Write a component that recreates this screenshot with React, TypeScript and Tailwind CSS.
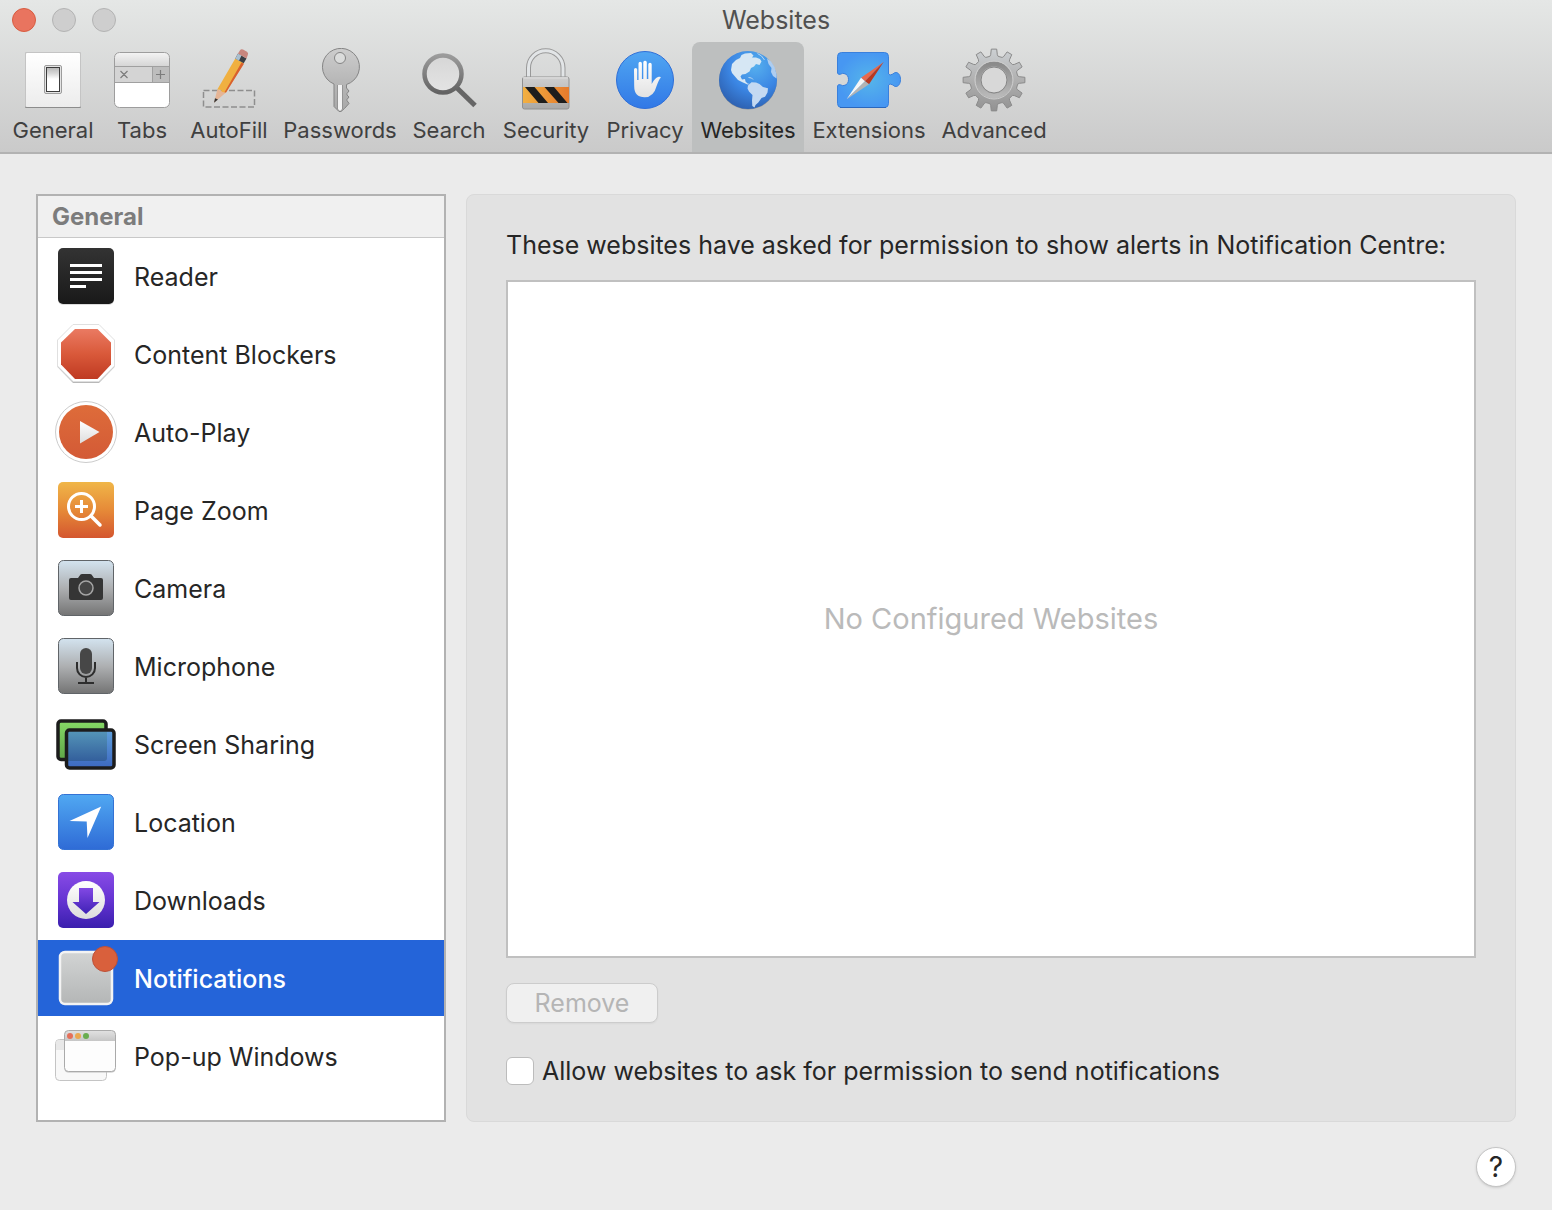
import { useState } from "react"
import type { ReactNode } from "react"

interface ToolbarTab {
  label: string
  width: string
  icon: ReactNode
}

interface SidebarItem {
  label: string
  icon: ReactNode
}

interface GradientProps {
  id: string
  from: string
  to: string
  mid?: string
}

const Gradient: React.FC<GradientProps> = ({ id, from, to, mid }) => (
  <linearGradient id={id} x1="0" y1="0" x2="0" y2="1">
    <stop offset="0" stopColor={from} />
    {mid && <stop offset="0.5" stopColor={mid} />}
    <stop offset="1" stopColor={to} />
  </linearGradient>
)

const Icon: React.FC<{ children: ReactNode }> = ({ children }) => (
  <svg className="size-16 shrink-0" viewBox="0 0 64 64" fill="none" aria-hidden="true">
    {children}
  </svg>
)

// one outline for the whole gear, twelve teeth
const gearPoints = Array.from({ length: 12 }, (_, i) => {
  const corners = [
    [-10, 24],
    [-7.5, 25.5],
    [-5, 31],
    [5, 31],
    [7.5, 25.5],
    [10, 24],
  ]
  return corners
    .map(([deg, r]) => {
      const a = ((i * 30 + deg - 90) * Math.PI) / 180
      return `${(32 + r * Math.cos(a)).toFixed(2)},${(32 + r * Math.sin(a)).toFixed(2)}`
    })
    .join(" ")
}).join(" ")

const toolbarTabs: ToolbarTab[] = [
  {
    label: "General",
    width: "w-[98px]",
    icon: (
      <Icon>
        <defs>
          <Gradient id="plate" from="#ffffff" to="#ececec" />
          <Gradient id="rocker" from="#b9b9b9" mid="#d8d8d8" to="#ffffff" />
        </defs>
        <rect x="4" y="5" width="56" height="55" rx="1" fill="#8c8c8c" />
        <rect x="4" y="4" width="56" height="55" rx="1" fill="#c4c4c4" />
        <rect x="5" y="5" width="54" height="54" rx="1" fill="url(#plate)" />
        <rect x="23.5" y="17.5" width="17" height="28" rx="1.5" fill="#e4e4e4" stroke="#9c9c9c" />
        <rect x="25.5" y="19.5" width="13" height="24" fill="#fff" stroke="#3c3c3c" />
        <rect x="26" y="20" width="12" height="11" fill="url(#rocker)" />
      </Icon>
    ),
  },
  {
    label: "Tabs",
    width: "w-20",
    icon: (
      <Icon>
        <defs>
          <Gradient id="tabsBar" from="#f4f4f4" to="#d6d6d6" />
        </defs>
        <rect x="4.5" y="4.5" width="55" height="55" rx="5" fill="#fff" />
        <path d="M4.5 18V9.5a5 5 0 0 1 5-5h45a5 5 0 0 1 5 5V18Z" fill="url(#tabsBar)" />
        <rect x="5" y="18" width="37" height="16" fill="#d4d4d4" />
        <rect x="42" y="18" width="17" height="16" fill="#bdbdbd" />
        <path d="M5 18.500H59M5 34.500H59M42.500 18V34" stroke="#a0a0a0" />
        <path d="m10.500 23 7 7m0-7-7 7M50.500 22v9M46 26.500h9" stroke="#7c7c7c" strokeWidth="1.200" />
        <rect x="4.5" y="4.5" width="55" height="55" rx="5" stroke="#9d9d9d" />
      </Icon>
    ),
  },
  {
    label: "AutoFill",
    width: "w-[94px]",
    icon: (
      <Icon>
        <rect x="6.5" y="42.5" width="51" height="16.5" stroke="#8e8e8e" strokeWidth="1.5" strokeDasharray="6 2.5" />
        <path d="M17 54.800 20.300 41.500 29 44.500Z" fill="#e5b596" />
        <path d="m17 54.800 1-4.500 3 1.200Z" fill="#333" />
        <path d="m20.300 41.500 18-31 8.500 4.500L29 44.500l-4-.5-1-2Z" fill="#f0b040" />
        <path d="m44.500 14.500 2.500 1.200L29 44.500l-1.500-.3Z" fill="#d8602f" />
        <path d="m38.300 10.500 2.700-5 8.500 5-2.800 4.700Z" fill="#3b3f45" />
        <path d="m38.300 10.500 2.700-5 3.500 2-2.500 5.200Z" fill="#a9c0d0" />
        <path d="m41 5.500 2-3.300q1-1.500 3-.7l4 2.300q1.800 1.200.8 3.200l-1.300 3.500Z" fill="#c8867e" />
      </Icon>
    ),
  },
  {
    label: "Passwords",
    width: "w-32",
    icon: (
      <Icon>
        <defs>
          <Gradient id="key" from="#cdcdcd" mid="#b8b8b8" to="#a8a8a8" />
        </defs>
        <path
          fillRule="evenodd"
          d="M26 36A18.500 18.500 0 1 1 38.500 36.500V40l2.500 3-2 2.500v1.500l2 2-2 2.500v1l2 3-4.500 5-3.500 3h-2l-5-5ZM32 4.500a5.500 5.500 0 1 0 0 11 5.500 5.500 0 0 0 0-11Z"
          fill="url(#key)"
          stroke="#858585"
        />
        <path d="M30 37h4v24l-2 2-2-2Z" fill="#f2f2f2" />
        <path d="M29.500 37v24M34.500 37v24" stroke="#8d8d8d" strokeWidth=".8" />
      </Icon>
    ),
  },
  {
    label: "Search",
    width: "w-[90px]",
    icon: (
      <Icon>
        <defs>
          <Gradient id="lensRing" from="#9b9b9b" to="#636363" />
          <Gradient id="lensGlass" from="#d6d6d6" to="#e4e4e4" />
        </defs>
        <path d="m39 39 19 18.500" stroke="#666" strokeWidth="5" />
        <circle cx="26" cy="26" r="18.5" fill="url(#lensGlass)" stroke="url(#lensRing)" strokeWidth="4.5" />
      </Icon>
    ),
  },
  {
    label: "Security",
    width: "w-[104px]",
    icon: (
      <Icon>
        <defs>
          <Gradient id="lockBody" from="#cfcfcf" to="#a8a8a8" />
          <linearGradient id="lockStripe">
            <stop offset="0" stopColor="#f2b042" />
            <stop offset="1" stopColor="#e57a2c" />
          </linearGradient>
        </defs>
        <path d="M14.500 30V20a17 17 0 0 1 34.500 0v10" stroke="#999" strokeWidth="5" />
        <path d="M14.500 30V20a17 17 0 0 1 34.500 0v10" stroke="#e2e5e7" strokeWidth="3" />
        <rect x="8.5" y="29" width="46.5" height="32" rx="2" fill="url(#lockBody)" stroke="#909090" />
        <path d="M9 29.800h45" stroke="#e6e6e6" />
        <rect x="9" y="39" width="46" height="16" fill="url(#lockStripe)" />
        <path d="M11 39h9.500L34 55h-9.500ZM30.500 39H40l13.500 16H44.500Z" fill="#1d1d1d" />
      </Icon>
    ),
  },
  {
    label: "Privacy",
    width: "w-[94px]",
    icon: (
      <Icon>
        <defs>
          <Gradient id="privacy" from="#50a6f2" to="#3178e6" />
          <Gradient id="hand" from="#ffffff" to="#e2e2e2" />
        </defs>
        <circle cx="32" cy="32" r="28.5" fill="url(#privacy)" stroke="#2f6fd8" />
        <path
          d="M21 21.500a1.600 1.600 0 0 1 3.200 0V32h1.300V15.500a1.700 1.700 0 0 1 3.400 0V31h1.400V14.200a1.800 1.800 0 0 1 3.500 0V31h1.500V16.500a1.700 1.700 0 0 1 3.400 0V36q3.300-6.500 7-7.300 2.500-.3 2 1.100-1.700 1.500-4 8-3 11.500-12 11.500-10.500 0-10.500-11Z"
          fill="url(#hand)"
        />
      </Icon>
    ),
  },
  {
    label: "Websites",
    width: "w-28",
    icon: (
      <Icon>
        <defs>
          <radialGradient id="globe" cx="0.62" cy="0.25" r="0.8">
            <stop offset="0" stopColor="#56b0ee" />
            <stop offset="0.55" stopColor="#3b86e4" />
            <stop offset="1" stopColor="#2d5fae" />
          </radialGradient>
        </defs>
        <circle cx="32" cy="32.5" r="29" fill="#8f9296" />
        <circle cx="32" cy="32" r="29" fill="url(#globe)" />
        <path
          d="M15 22 16 16 20 12 24 10 25.500 7 29 5.500 35 5 37.500 7.500 36 9.500 40 9.500 44 11 45.500 13.500 43.500 17 40 16 38 18.500 35 20 33.500 23.500 31 25 29.500 26 26 26.500 24.500 28.500 26 31.500 29 31 29.500 33.500 31.500 35.500 34 36 31.500 36.500 27 34.500 22 32 19 28.500 16 25Z"
          fill="#d6e7f4"
        />
        <path
          d="M32 37.500 35.500 34.300 40 34.500 43.500 36 47 39 52 40.300 51.500 44.500 49 48.700 45.500 50 42.300 54.500 39.500 57 38.500 59.500 36.300 58 36 52.500 36.500 47 33 43.500 31.500 40.500Z"
          fill="#c4d9f2"
        />
        <path d="M51 10.500 55 13.500 58.500 19 60.700 27 60.500 30.500 57 28 55 24 55.500 20 52.500 16Z" fill="#aecdf0" />
        <path d="m32.500 29.500 3 .5 1.500 1.500M41.500 5.500l4 2.500 3 4" stroke="#b8d5f0" />
      </Icon>
    ),
  },
  {
    label: "Extensions",
    width: "w-[130px]",
    icon: (
      <Icon>
        <defs>
          <radialGradient id="puzzle">
            <stop offset="0" stopColor="#55b5ea" />
            <stop offset="1" stopColor="#4797f2" />
          </radialGradient>
        </defs>
        <path
          d="M4.500 4.500h43a4 4 0 0 1 4 4V26q1 2 4.500 0 1-1.500 3-1.500c2.500 0 4.500 3 4.500 7s-2 7-4.500 7q-2 0-3-1.500-3.500-2-4.500 0v18.500a4 4 0 0 1-4 4h-43a4 4 0 0 1-4-4V38q.5-2 3-1.200 2 1.200 3.500.7 4.500-1 4.500-6t-4.500-6q-1.500-.5-3.500.7-2.500.8-3-1.200V8.500a4 4 0 0 1 4-4Z"
          fill="url(#puzzle)"
          stroke="#3a80dc"
        />
        <path d="M3 59.500h46" stroke="#2a67bd" />
        <path d="M46.700 14 24 29.700l4 3.500Z" fill="#e8694c" />
        <path d="M46.700 14 28 33.200l4 3.100Z" fill="#b93820" />
        <path d="M9.700 51.300 24 29.700l4 3.500Z" fill="#f6f6f6" />
        <path d="M9.700 51.300 28 33.200l4 3.100Z" fill="#b4b4b4" />
      </Icon>
    ),
  },
  {
    label: "Advanced",
    width: "w-[120px]",
    icon: (
      <Icon>
        <defs>
          <Gradient id="gear" from="#ccd0d3" mid="#b0b0b0" to="#929292" />
          <Gradient id="gearRing" from="#8b8b8b" to="#b9b9b9" />
        </defs>
        <polygon points={gearPoints} fill="url(#gear)" stroke="#8b8b8b" strokeLinejoin="round" />
        <circle cx="32" cy="32" r="16" stroke="url(#gearRing)" strokeWidth="5" />
        <circle cx="32" cy="32" r="19" stroke="#cfcfcf" />
        <circle cx="32" cy="32" r="13" fill="#d8d8d8" stroke="#858585" />
      </Icon>
    ),
  },
]

const sidebarItems: SidebarItem[] = [
  {
    label: "Reader",
    icon: (
      <Icon>
        <defs>
          <Gradient id="reader" from="#333333" to="#191919" />
        </defs>
        <rect x="4" y="5" width="56" height="56" rx="5" fill="#dcdcdc" />
        <rect x="4" y="4" width="56" height="56" rx="5" fill="url(#reader)" />
        <path d="M16 21.500h32M16 28.500h32M16 35.500h32M16 42.500h16" stroke="#fff" strokeWidth="3" />
      </Icon>
    ),
  },
  {
    label: "Content Blockers",
    icon: (
      <Icon>
        <defs>
          <Gradient id="blocker" from="#ea7a62" mid="#d9593a" to="#bf3a22" />
        </defs>
        <path d="M19 4h26l15.500 15v26L45 61H19L3.500 45V19Z" fill="#b8b8b8" />
        <path d="M19 2.500h26L60.500 18v26L45 59.500H19L3.500 44V18Z" fill="#fff" stroke="#e0e0e0" />
        <path d="M21 7h22.500L57 20.500v22L43.500 57H21L7 42.500v-22Z" fill="url(#blocker)" />
      </Icon>
    ),
  },
  {
    label: "Auto-Play",
    icon: (
      <Icon>
        <defs>
          <Gradient id="play" from="#de6c3a" to="#d35a36" />
          <Gradient id="playArrow" from="#ffffff" to="#dddddd" />
        </defs>
        <circle cx="32" cy="32" r="30.5" fill="#fff" stroke="#cccccc" />
        <circle cx="32" cy="32" r="27" fill="url(#play)" />
        <path d="M26 21v22.500L45.500 32Z" fill="url(#playArrow)" />
      </Icon>
    ),
  },
  {
    label: "Page Zoom",
    icon: (
      <Icon>
        <defs>
          <Gradient id="zoom" from="#f0b648" mid="#e68a38" to="#d4562f" />
        </defs>
        <rect x="4" y="4" width="56" height="56" rx="5" fill="url(#zoom)" />
        <circle cx="27.5" cy="28.5" r="13" stroke="#fff" strokeWidth="3" />
        <path d="M27.500 22v13M21 28.500h13" stroke="#fff" strokeWidth="3" />
        <path d="m37 38 9 9" stroke="#fff" strokeWidth="3.5" strokeLinecap="round" />
      </Icon>
    ),
  },
  {
    label: "Camera",
    icon: (
      <Icon>
        <defs>
          <Gradient id="camera" from="#d3e3ef" mid="#aeb0b2" to="#747474" />
        </defs>
        <rect x="4.5" y="4.5" width="55" height="55" rx="5" fill="url(#camera)" stroke="#606468" />
        <path
          d="M17 22h7l2.500-3.500q.5-.5 1.500-.5h8q1 0 1.500.5L40 22h7a2 2 0 0 1 2 2v18a2 2 0 0 1-2 2H17a2 2 0 0 1-2-2V24a2 2 0 0 1 2-2Z"
          fill="#353535"
        />
        <circle cx="32" cy="32" r="7" fill="#454545" stroke="#a5a5a5" strokeWidth="1.5" />
      </Icon>
    ),
  },
  {
    label: "Microphone",
    icon: (
      <Icon>
        <defs>
          <Gradient id="mic" from="#d3e3ef" mid="#aeb0b2" to="#747474" />
        </defs>
        <rect x="4.5" y="4.5" width="55" height="55" rx="5" fill="url(#mic)" stroke="#606468" />
        <rect x="26" y="14" width="12" height="26" rx="6" fill="#474747" />
        <path d="M23 28v6a9 9 0 0 0 18 0v-6M32 43v6M24 49h16" stroke="#2d2d2d" strokeWidth="2" />
      </Icon>
    ),
  },
  {
    label: "Screen Sharing",
    icon: (
      <Icon>
        <defs>
          <Gradient id="greenScreen" from="#86d966" to="#5fa548" />
          <Gradient id="blueScreen" from="#5fa0dc" to="#3c68c0" />
          <Gradient id="screenOverlap" from="#5494b8" to="#335f9c" />
        </defs>
        <rect x="4" y="9" width="48" height="38.5" rx="3" fill="url(#greenScreen)" stroke="#1c1c1c" strokeWidth="3.5" />
        <rect x="12.5" y="18" width="47.5" height="38" rx="3" fill="url(#blueScreen)" />
        <path d="M14 19.500h39V46a3 3 0 0 1-3 3H14Z" fill="url(#screenOverlap)" />
        <rect x="12.5" y="18" width="47.5" height="38" rx="3" stroke="#1c1c1c" strokeWidth="3.5" />
      </Icon>
    ),
  },
  {
    label: "Location",
    icon: (
      <Icon>
        <defs>
          <Gradient id="location" from="#50a8f2" to="#2f6bd6" />
        </defs>
        <rect x="4.5" y="4.5" width="55" height="55" rx="5" fill="url(#location)" stroke="#3472d4" />
        <path d="M47.200 16.500 33.500 48l-.8-16.500L15.500 31Z" fill="#fff" />
      </Icon>
    ),
  },
  {
    label: "Downloads",
    icon: (
      <Icon>
        <defs>
          <Gradient id="downloads" from="#884be6" mid="#6534d2" to="#3a1fae" />
          <Gradient id="downloadsDisc" from="#ffffff" to="#dddddd" />
          <Gradient id="downloadsArrow" from="#8248e4" to="#3f22b6" />
        </defs>
        <rect x="4" y="4" width="56" height="56" rx="5" fill="url(#downloads)" />
        <circle cx="32" cy="32" r="19" fill="url(#downloadsDisc)" />
        <path d="M25 20h14v14h6.500L32 46 18.500 34H25Z" fill="url(#downloadsArrow)" />
      </Icon>
    ),
  },
  {
    label: "Notifications",
    icon: (
      <Icon>
        <defs>
          <Gradient id="notifications" from="#d2d4d4" to="#b4b6b6" />
        </defs>
        <rect x="6" y="6" width="52" height="52" rx="5" fill="url(#notifications)" stroke="#f3f3f3" strokeWidth="2.5" />
        <circle cx="51" cy="13" r="12.5" fill="#d9603c" stroke="#bd5038" />
      </Icon>
    ),
  },
  {
    label: "Pop-up Windows",
    icon: (
      <Icon>
        <defs>
          <Gradient id="popupBar" from="#e2e2e2" to="#c6c6c6" />
        </defs>
        <rect x="1.5" y="15.5" width="51" height="41" rx="4" fill="#f8f8f8" stroke="#c4c4c4" />
        <path d="M2 19q0-3 3-3h6v10H2Z" fill="#e8e8e8" />
        <rect x="10.5" y="7.5" width="51" height="41" rx="4" fill="#bdbdbd" />
        <rect x="10.5" y="6.5" width="51" height="41" rx="4" fill="#fdfdfd" />
        <path d="M10.500 17v-6.500a4 4 0 0 1 4-4h43a4 4 0 0 1 4 4V17Z" fill="url(#popupBar)" />
        <rect x="10.5" y="6.5" width="51" height="41" rx="4" stroke="#aaaaaa" />
        <circle cx="16" cy="12" r="3" fill="#e5705a" />
        <circle cx="24" cy="12" r="3" fill="#eba850" />
        <circle cx="32" cy="12" r="3" fill="#68ad50" />
      </Icon>
    ),
  },
]

const App: React.FC = () => {
  const [activeTab, setActiveTab] = useState<string>("Websites")
  const [activeItem, setActiveItem] = useState<string>("Notifications")
  const [allowAsk, setAllowAsk] = useState<boolean>(false)

  return (
    <div className="flex min-h-screen flex-col bg-[#ebebeb] font-['Inter',sans-serif] text-[#262626]">
      <header className="border-b-2 border-[#b2b2b2] bg-linear-to-b from-[#e5e7e6] to-[#cacaca]">
        <div className="grid h-[42px] grid-cols-[1fr_auto_1fr] items-start px-3 pt-2">
          <div className="flex gap-4">
            <button aria-label="Close" className="size-6 rounded-full border border-[#d85c40] bg-[#e9745f]" />
            <button aria-label="Minimise" className="size-6 rounded-full border border-[#b3b3b3] bg-[#cecece]" />
            <button aria-label="Zoom" className="size-6 rounded-full border border-[#b3b3b3] bg-[#cecece]" />
          </div>
          <h1 className="text-[25px] leading-6 text-[#505050]">Websites</h1>
        </div>
        <nav className="flex px-1" aria-label="Preferences">
          {toolbarTabs.map((tab) => (
            <button
              key={tab.label}
              aria-current={activeTab === tab.label ? "page" : undefined}
              onClick={() => setActiveTab(tab.label)}
              className={`flex h-[110px] flex-col items-center rounded-t-lg pt-1.5 text-[22px] ${tab.width} ${
                activeTab === tab.label ? "bg-[#bdbfbf] text-[#262626]" : "text-[#404040]"
              }`}
            >
              {tab.icon}
              <span className="leading-9">{tab.label}</span>
            </button>
          ))}
        </nav>
      </header>

      <main className="flex grow gap-5 px-9 pt-10">
        <aside className="w-[410px] shrink-0 border-2 border-[#b2b2b2] bg-white pb-[26px]">
          <h2 className="h-[42px] border-b border-[#c8c8c8] bg-[#f0f0f0] px-3.5 text-2xl leading-[42px] font-bold text-[#7c7c7c]">
            General
          </h2>
          <ul className="flex flex-col gap-0.5">
            {sidebarItems.map((item) => (
              <li key={item.label}>
                <button
                  aria-current={activeItem === item.label ? "true" : undefined}
                  onClick={() => setActiveItem(item.label)}
                  className={`flex h-[76px] w-full items-center gap-4 px-4 text-left text-[25px] ${
                    activeItem === item.label ? "bg-[#2464d9] font-medium text-white" : ""
                  }`}
                >
                  {item.icon}
                  <span className="pt-1">{item.label}</span>
                </button>
              </li>
            ))}
          </ul>
        </aside>

        <section className="flex grow flex-col rounded-lg border border-[#d9d9d9] bg-[#e2e2e2] px-[39px] pt-8 pb-8">
          <p className="text-[25px] leading-9">
            These websites have asked for permission to show alerts in Notification Centre:
          </p>
          <div className="mt-[17px] flex grow items-center justify-center border-2 border-[#c0c0c0] bg-white text-[29px] text-[#bababa]">
            No Configured Websites
          </div>
          <button
            disabled
            className="mt-[25px] h-10 w-38 rounded-lg border border-[#cccccc] bg-[#f0f0f0] text-[25px] leading-9 text-[#b5b5b5] shadow-xs"
          >
            Remove
          </button>
          <label className="mt-[30px] flex items-center gap-2 text-[25px] leading-9">
            <input
              type="checkbox"
              checked={allowAsk}
              onChange={(e) => setAllowAsk(e.target.checked)}
              className="size-7 appearance-none rounded-md border border-[#bcbcbc] bg-white checked:bg-[#2464d9]"
            />
            Allow websites to ask for permission to send notifications
          </label>
        </section>
      </main>

      <footer className="flex justify-end px-9 pt-[25px] pb-[23px]">
        <button
          aria-label="Help"
          className="size-10 rounded-full border border-[#c4c4c4] bg-white text-[28px] leading-9 shadow-sm"
        >
          ?
        </button>
      </footer>
    </div>
  )
}

export default App
